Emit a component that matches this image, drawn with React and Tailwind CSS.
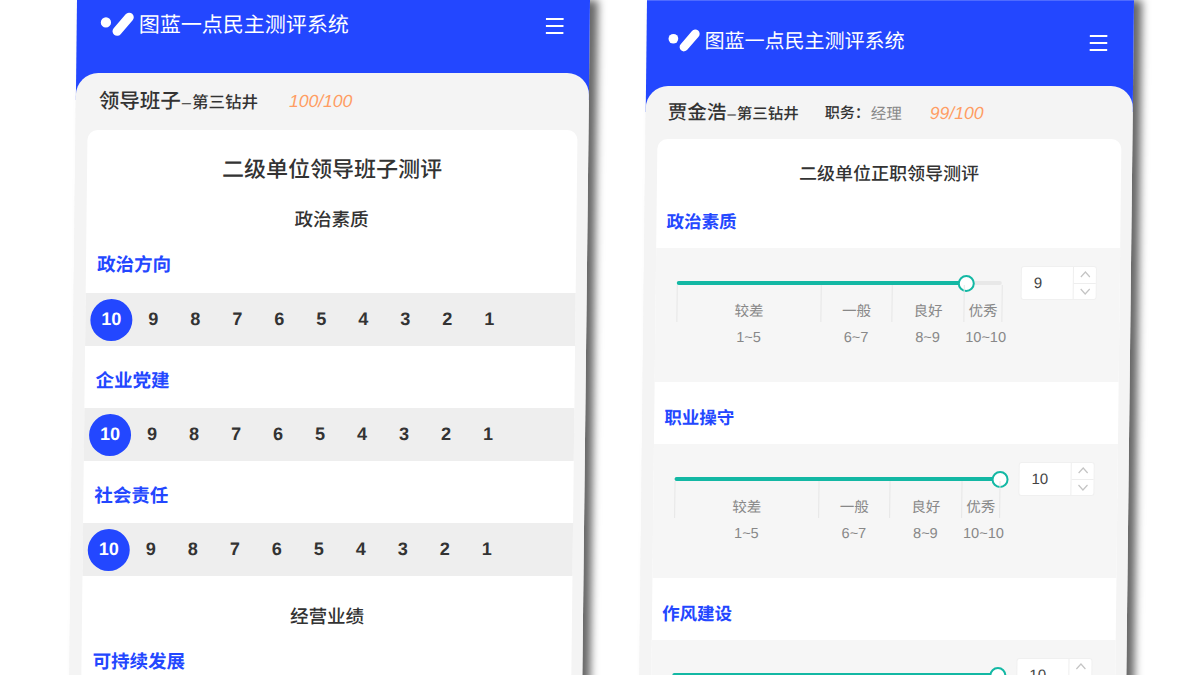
import React from 'react';

const fontCls = "font-['Liberation_Sans','Noto_Sans_CJK_SC',sans-serif]";

const Logo = ({ size = 34 }) => (
  <svg width={size} height={size * 0.8} viewBox="0 0 34 27" className="shrink-0">
    <circle cx="6" cy="11" r="5" fill="#fff" />
    <line x1="17" y1="19.5" x2="28.5" y2="6" stroke="#fff" strokeWidth="9" strokeLinecap="round" />
  </svg>
);

const Menu = () => (
  <svg width="18" height="16" viewBox="0 0 18 16" className="shrink-0">
    <path d="M0 1h18M0 8h18M0 15h18" stroke="#fff" strokeWidth="2" fill="none" />
  </svg>
);

const ScoreRow = () => (
  <div className="flex items-center h-[53px] bg-[#eeeeee] pl-[5px]">
    {[10, 9, 8, 7, 6, 5, 4, 3, 2, 1].map((n) => (
      <div
        key={n}
        className={
          n === 10
            ? 'w-[42px] h-[42px] rounded-full bg-[#2347ff] text-white flex items-center justify-center text-[18px] font-bold'
            : 'w-[42px] h-[42px] text-[#333] flex items-center justify-center text-[18px] font-bold'
        }
      >
        {n}
      </div>
    ))}
  </div>
);

const Zone = ({ w, label, range, rangeCls = '' }) => (
  <div className={`${w} relative h-[37px] border-l border-[#e6e6e6] text-[14.5px] text-[#888] flex justify-center items-center pt-[17px]`}>
    {label}
    <span className={`absolute top-[42px] left-0 right-0 flex justify-center whitespace-nowrap ${rangeCls}`}>{range}</span>
  </div>
);

const SliderBlock = ({ value, zones = true }) => {
  const pct = ((value - 1) / 9) * 100;
  return (
    <div className="h-[134px] bg-[#f6f6f6] flex pl-[21px] pt-[27px]">
      <div className="relative w-[325px] h-[17px] shrink-0">
        <div className="absolute left-0 right-0 top-[6px] h-[4px] rounded-full bg-[#e8e8e8]" />
        <div className="absolute left-0 top-[6px] h-[4px] rounded-full bg-[#13b8a4]" style={{ width: `${pct}%` }} />
        <div
          className="absolute top-0 w-[17px] h-[17px] -ml-[8px] rounded-full bg-white border-[2.5px] border-[#13b8a4]"
          style={{ left: `${pct}%` }}
        />
        {zones && (
          <div className="absolute left-0 top-[10px] flex border-r border-[#e6e6e6]">
            <Zone w="w-[144px]" label="较差" range="1~5" />
            <Zone w="w-[71px]" label="一般" range="6~7" />
            <Zone w="w-[72px]" label="良好" range="8~9" />
            <Zone w="w-[38px]" label="优秀" range="10~10" rangeCls="pl-[6px]" />
          </div>
        )}
      </div>
      <div className="ml-[19px] w-[76px] h-[34px] -mt-[9px] flex bg-white border border-[#f0f0f0] rounded-[3px] text-[15px] text-[#444]">
        <div className="flex-1 flex items-center pl-[12px]">{value}</div>
        <div className="w-[23px] flex flex-col border-l border-[#eeeeee]">
          <div className="flex-1 flex items-center justify-center border-b border-[#eeeeee]">
            <svg width="11" height="7" viewBox="0 0 11 7"><path d="M1 6l4.5-5 4.5 5" stroke="#c4c4c4" strokeWidth="1.2" fill="none" /></svg>
          </div>
          <div className="flex-1 flex items-center justify-center">
            <svg width="11" height="7" viewBox="0 0 11 7"><path d="M1 1l4.5 5 4.5-5" stroke="#c4c4c4" strokeWidth="1.2" fill="none" /></svg>
          </div>
        </div>
      </div>
    </div>
  );
};

const App = () => {
  return (
    <div className={`w-[1200px] h-[675px] overflow-hidden bg-white flex pl-[77px] ${fontCls}`}>
      {/* left phone */}
      <div className="w-[512.5px] h-[760px] shrink-0 bg-[#f4f4f4] origin-top-left skew-x-[-0.65deg] shadow-[8px_0_8px_rgba(0,0,0,0.6)]">
        <div className="h-[100px] bg-[#2347ff] flex pl-[23px] pr-[26px] pt-[11px] items-start justify-between">
          <div className="flex items-center gap-[4px]">
            <Logo size={35} />
            <span className="text-[21px] leading-[26px] text-white">图蓝一点民主测评系统</span>
          </div>
          <div className="pt-[7px]"><Menu /></div>
        </div>
        <div className="h-[690px] -mt-[27px] relative bg-[#f4f4f4] rounded-t-[22px]">
          <div className="h-[57px] flex items-center pl-[23px] text-[#333]">
            <span className="text-[20.5px] font-medium">领导班子</span>
            <span className="text-[16.5px] font-medium pt-[2px] pl-[1px] pr-[1px]">–</span>
            <span className="text-[16.5px] font-medium pt-[2px]">第三钻井</span>
            <span className="ml-[31px] text-[17.5px] italic text-[#ff9d63]">100/100</span>
          </div>
          <div className="ml-[12px] mr-[10.5px] bg-white rounded-t-[10px]">
            <div className="h-[78px] flex items-center justify-center text-[22px] font-medium text-[#333]">二级单位领导班子测评</div>
            <div className="h-[23px] flex items-center justify-center text-[18.5px] font-medium text-[#333]">政治素质</div>
            <div className="h-[62px] flex items-center pl-[11px] pt-[6px] text-[18.5px] font-bold text-[#2347ff]">政治方向</div>
            <ScoreRow />
            <div className="h-[62px] flex items-center pl-[11px] pt-[8px] text-[18.5px] font-bold text-[#2347ff]">企业党建</div>
            <ScoreRow />
            <div className="h-[62px] flex items-center pl-[11px] pt-[8px] text-[18.5px] font-bold text-[#2347ff]">社会责任</div>
            <ScoreRow />
            <div className="h-[72px] flex items-center justify-center pt-[10px] text-[18.5px] font-medium text-[#333]">经营业绩</div>
            <div className="h-[28px] flex items-center pl-[11px] text-[18.5px] font-bold text-[#2347ff]">可持续发展</div>
          </div>
        </div>
      </div>

      {/* right phone */}
      <div className="w-[487px] h-[760px] ml-[57.5px] shrink-0 bg-[#f4f4f4] origin-top-left skew-x-[-0.65deg] shadow-[8px_0_8px_rgba(0,0,0,0.6)]">
        <div className="h-[112px] bg-[#2347ff] border-t border-[#4f6bff] flex pl-[21px] pr-[26px] pt-[27px] items-start justify-between">
          <div className="flex items-center gap-[4px]">
            <Logo size={33} />
            <span className="text-[20px] leading-[26px] text-white">图蓝一点民主测评系统</span>
          </div>
          <div className="pt-[7px]"><Menu /></div>
        </div>
        <div className="h-[680px] -mt-[26px] relative bg-[#f4f4f4] rounded-t-[22px]">
          <div className="h-[53px] flex items-center pl-[22px] text-[#333]">
            <span className="text-[19.5px] font-medium">贾金浩</span>
            <span className="text-[15.5px] font-medium pt-[2px] pl-[1px] pr-[1px]">–</span>
            <span className="text-[15.5px] font-medium pt-[2px]">第三钻井</span>
            <span className="ml-[26px] text-[15px] font-medium pt-[2px]">职务：</span>
            <span className="ml-[1px] text-[15.5px] text-[#888] pt-[2px]">经理</span>
            <span className="ml-[28px] text-[17.5px] italic text-[#ff9d63] pt-[2px]">99/100</span>
          </div>
          <div className="ml-[12px] mr-[11px] bg-white rounded-t-[10px]">
            <div className="h-[68px] flex items-center justify-center pt-[2px] text-[18px] font-medium text-[#333]">二级单位正职领导测评</div>
            <div className="h-[41px] flex items-center pl-[10px] pb-[10px] text-[17.5px] font-bold text-[#2347ff]">政治素质</div>
            <SliderBlock value={9} />
            <div className="h-[62px] flex items-center pl-[10px] pt-[10px] text-[17.5px] font-bold text-[#2347ff]">职业操守</div>
            <SliderBlock value={10} />
            <div className="h-[62px] flex items-center pl-[10px] pt-[10px] text-[17.5px] font-bold text-[#2347ff]">作风建设</div>
            <SliderBlock value={10} zones={false} />
          </div>
        </div>
      </div>
    </div>
  );
};

export default App;
